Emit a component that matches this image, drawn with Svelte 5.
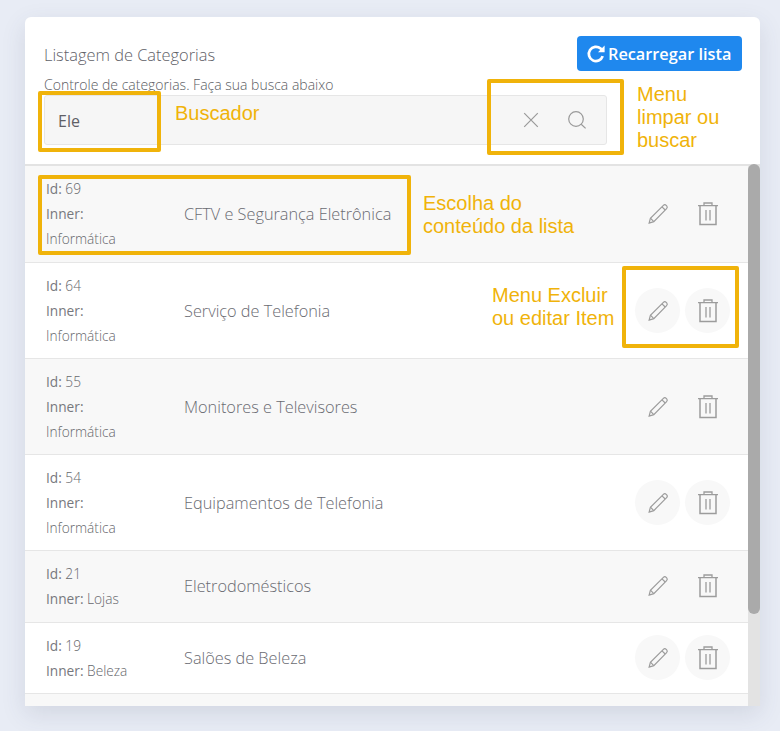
<script>
  const rows = [
    { id: 69, inner: 'Informática', name: 'CFTV e Segurança Eletrônica', tall: true },
    { id: 64, inner: 'Informática', name: 'Serviço de Telefonia', tall: true },
    { id: 55, inner: 'Informática', name: 'Monitores e Televisores', tall: true },
    { id: 54, inner: 'Informática', name: 'Equipamentos de Telefonia', tall: true },
    { id: 21, inner: 'Lojas', name: 'Eletrodomésticos', tall: false },
    { id: 19, inner: 'Beleza', name: 'Salões de Beleza', tall: false }
  ];
</script>

<div class="page">
  <main class="card">
    <header class="head">
      <div class="head-text">
        <h1>Listagem de Categorias</h1>
        <p>Controle de categorias. Faça sua busca abaixo</p>
      </div>
      <button class="reload" type="button">
        <svg width="20" height="20" viewBox="0 0 20 20" fill="none" stroke="#fff" stroke-width="2.7">
          <path d="M16.7 12.2A7.1 7.1 0 1 1 14.6 4.6L16.8 6.6" />
          <path d="M18.6 1.6V8.2H12" fill="#fff" stroke="none" />
        </svg>
        Recarregar lista
      </button>
    </header>

    <div class="search">
      <span class="query">Ele</span>
      <svg class="clear" width="18" height="18" viewBox="0 0 18 18" fill="none" stroke="#9a9a9a" stroke-width="1.2">
        <path d="M2.2 2.2L15.8 15.8M15.8 2.2L2.2 15.8" />
      </svg>
      <svg class="find" width="20" height="20" viewBox="0 0 20 20" fill="none" stroke="#9a9a9a" stroke-width="1.2">
        <circle cx="9" cy="9" r="7.3" />
        <path d="M14.2 14.2L18.6 18.4" />
      </svg>
    </div>

    <div class="list-wrap">
      <div class="list">
        {#each rows as r}
          <div class="row" class:tall={r.tall}>
            <div class="meta">
              <div class="line"><b>Id:</b> {r.id}</div>
              {#if r.tall}
                <div class="line"><b>Inner:</b></div>
                <div class="line">{r.inner}</div>
              {:else}
                <div class="line"><b>Inner:</b> {r.inner}</div>
              {/if}
            </div>
            <div class="name">{r.name}</div>
            <div class="actions">
              <span class="round">
                <svg width="22" height="22" viewBox="0 0 22 22" fill="none" stroke="#9c9c9c" stroke-width="1.2">
                  <path d="M2.2 20L3.4 15.2L16.4 2.4C17.2 1.6 18.4 1.6 19.2 2.4L19.7 2.9C20.4 3.7 20.4 4.8 19.6 5.6L6.8 18.6Z" />
                  <path d="M3.4 15.2L6.8 18.6M15 3.8L18.2 7" />
                </svg>
              </span>
              <span class="round">
                <svg width="22" height="24" viewBox="0 0 22 24" fill="none" stroke="#9c9c9c" stroke-width="1.3">
                  <path d="M1 3.6H21M7 3.4V1H15V3.4" />
                  <path d="M3 3.6V22.6H19V3.6" stroke-width="1.5" />
                  <path d="M9 8V18.5M13 8V18.5" />
                </svg>
              </span>
            </div>
          </div>
        {/each}
        <div class="row rest"></div>
      </div>
      <div class="rail"><div class="thumb"></div></div>
    </div>
  </main>

  <!-- Annotation layer drawn over the screenshot -->
  <div class="mark" style="left:38px;top:91px;width:123px;height:61px"></div>
  <div class="mark" style="left:487px;top:79px;width:137px;height:76px"></div>
  <div class="mark" style="left:38px;top:175px;width:373px;height:80px"></div>
  <div class="mark" style="left:622px;top:266px;width:117px;height:82px"></div>
  <div class="note" style="left:175px;top:102px">Buscador</div>
  <div class="note" style="left:637px;top:83px">Menu<br />limpar ou<br />buscar</div>
  <div class="note" style="left:423px;top:192px">Escolha do<br />conteúdo da lista</div>
  <div class="note" style="left:492px;top:284px">Menu Excluir<br />ou editar Item</div>
</div>

<style>
  :global(body) {
    margin: 0;
    background: #e8ecf5;
  }
  .page {
    position: relative;
    width: 780px;
    height: 731px;
    padding: 17px 20px 25px 25px;
    box-sizing: border-box;
    overflow: hidden;
    font-family: "Open Sans", "Noto Sans", sans-serif;
    color: #6c6c72;
  }
  .card {
    width: 735px;
    height: 689px;
    background: #fff;
    border-radius: 6px 6px 0 0;
    box-shadow: 0 8px 24px rgba(60, 70, 100, 0.13);
    display: flex;
    flex-direction: column;
  }
  .head {
    display: flex;
    justify-content: space-between;
    align-items: flex-start;
    padding: 19px 18px 0 19px;
    height: 59px;
    box-sizing: border-box;
  }
  h1 {
    margin: 8px 0 0;
    font-size: 16.4px;
    line-height: 21px;
    font-weight: 300;
    color: #5f6168;
  }
  .head-text p {
    margin: 11px 0 0;
    font-size: 14px;
    line-height: 18px;
    font-weight: 300;
    color: #5a5c62;
    white-space: nowrap;
  }
  .reload {
    display: flex;
    align-items: center;
    gap: 2px;
    height: 35px;
    width: 165px;
    padding: 0 0 0 9px;
    border: 0;
    border-radius: 4px;
    background: #1f88ee;
    color: #fff;
    font-family: "Open Sans", sans-serif;
    font-size: 16.3px;
    font-weight: 600;
    white-space: nowrap;
  }
  .search {
    margin: 19px 153px 0 19px;
    height: 50px;
    box-sizing: border-box;
    border: 1px solid #e6e6e6;
    border-radius: 3px;
    background: #f6f6f6;
    display: flex;
    align-items: center;
    padding: 0 19px 0 13px;
  }
  .query {
    flex: 1;
    font-size: 16px;
    line-height: 24px;
    padding-top: 2px;
    color: #5f6066;
  }
  .clear {
    margin-right: 27px;
  }
  .list-wrap {
    margin-top: 19px;
    flex: 1;
    min-height: 0;
    display: flex;
    overflow: hidden;
  }
  .list {
    flex: 1;
    min-width: 0;
    border-top: 2px solid #e3e3e3;
    overflow: hidden;
  }
  .rail {
    width: 12px;
    flex: none;
    background: #e3e3e3;
  }
  .thumb {
    height: 450px;
    background: #aaaaaa;
    border-radius: 6px;
  }
  .row {
    display: flex;
    align-items: center;
    height: 71.5px;
    box-sizing: border-box;
    border-top: 1px solid #e6e6e6;
    padding-left: 21px;
  }
  .row:first-child {
    border-top: 0;
  }
  .row:first-child .meta {
    margin-bottom: 1px;
  }
  .row.tall {
    height: 96px;
  }
  .row:nth-child(odd) {
    background: #f8f8f8;
  }
  .meta {
    width: 138px;
    flex: none;
    font-size: 13.7px;
    font-weight: 300;
    color: #66676c;
  }
  .line {
    line-height: 25px;
    white-space: nowrap;
  }
  .line b {
    font-weight: 400;
    color: #77787e;
  }
  .name {
    flex: 1;
    font-size: 16.3px;
    font-weight: 300;
    color: #6a6b72;
    white-space: nowrap;
  }
  .actions {
    display: flex;
    gap: 5px;
    padding-right: 18px;
  }
  .round {
    width: 45px;
    height: 45px;
    border-radius: 50%;
    background: #f8f8f8;
    display: flex;
    align-items: center;
    justify-content: center;
  }
  .mark {
    position: absolute;
    box-sizing: border-box;
    border: 4px solid #f0b30a;
    border-radius: 2px;
  }
  .note {
    position: absolute;
    font-family: "Liberation Sans", Arial, sans-serif;
    font-size: 20px;
    line-height: 23px;
    color: #f0b30a;
    white-space: nowrap;
  }
</style>
